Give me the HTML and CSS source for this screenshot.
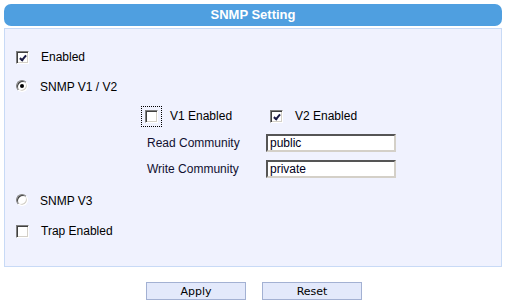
FILE: index.html
```html
<!DOCTYPE html>
<html lang="en">
<head>
    <meta charset="UTF-8">
    <title>SNMP Setting</title>
    <link rel="stylesheet" href="styles.css">
</head>
<body>
    <div class="page">
        <div class="header">SNMP Setting</div>

        <div class="panel">
            <label class="row">
                <input type="checkbox" class="check" checked>
                <span>Enabled</span>
            </label>
            <label class="row">
                <input type="radio" name="ver" class="radio" checked>
                <span>SNMP V1 / V2</span>
            </label>

            <!-- v1/v2 options -->
            <div class="sub">
                <label class="sub-cell">
                    <input type="checkbox" class="check focus">
                    <span>V1 Enabled</span>
                </label>
                <label class="sub-cell v2">
                    <input type="checkbox" class="check" checked>
                    <span>V2 Enabled</span>
                </label>
                <div class="sub-label">Read Community</div>
                <div class="sub-field"><input type="text" class="text" value="public"></div>
                <div class="sub-label">Write Community</div>
                <div class="sub-field"><input type="text" class="text" value="private"></div>
            </div>

            <label class="row">
                <input type="radio" name="ver" class="radio">
                <span>SNMP V3</span>
            </label>
            <label class="row">
                <input type="checkbox" class="check">
                <span>Trap Enabled</span>
            </label>
        </div>

        <div class="buttons">
            <button class="btn">Apply</button>
            <button class="btn">Reset</button>
        </div>
    </div>
</body>
</html>
```

FILE: styles.css
```css
body {
    margin: 0;
    background: #fff;
    font-family: 'Liberation Sans', Arial, sans-serif;
    font-size: 12px;
    color: #000;
}

.page {
    padding: 4px 4px 0 4px;
}

.header {
    height: 22px;
    line-height: 22px;
    border-radius: 7px;
    background: #4f9fe0;
    color: #fff;
    font-weight: bold;
    font-size: 13px;
    text-align: center;
}

.panel {
    margin-top: 2px;
    height: 239px;
    padding: 13px 0 0 11px;
    box-sizing: border-box;
    border: 1px solid #c8daf6;
    background: #f0f2fe;
}

.row {
    display: flex;
    align-items: center;
    gap: 12px;
    height: 30px;
}

/* classic checkbox / radio */
.check,
.radio {
    appearance: none;
    -webkit-appearance: none;
    margin: 0;
    width: 13px;
    height: 13px;
    flex: none;
    position: relative;
    background: #fff;
    border: 1px solid;
    border-color: #808080 #fff #fff #808080;
    box-shadow: inset 1px 1px #404040, inset -1px -1px #d4d0c8;
    box-sizing: border-box;
}

.check:checked::after {
    content: '';
    position: absolute;
    left: 4px;
    top: 2px;
    width: 2px;
    height: 5px;
    border: solid #1a1a44;
    border-width: 0 2px 2px 0;
    transform: rotate(40deg);
}

.radio {
    width: 12px;
    height: 12px;
    border-radius: 50%;
    margin-top: -3px;
}

.radio:checked::after {
    content: '';
    position: absolute;
    left: 3px;
    top: 3px;
    width: 4px;
    height: 4px;
    border-radius: 50%;
    background: #000;
}

.focus {
    outline: 1px dotted #000;
    outline-offset: 3px;
}

.sub {
    display: grid;
    grid-template-columns: 121px 130px;
    grid-auto-rows: 26px;
    grid-template-rows: 28px;
    margin-left: 129px;
    margin-bottom: 4px;
    align-items: center;
}

.sub-cell {
    display: flex;
    align-items: center;
    gap: 12px;
}

.v2 {
    padding-left: 4px;
}

.sub-label {
    padding-left: 2px;
    color: #101030;
}

.text {
    width: 130px;
    height: 18px;
    margin: 0;
    padding: 0 2px;
    box-sizing: border-box;
    background: #fff;
    border: 2px solid;
    border-color: #555 #d4d0c8 #d4d0c8 #555;
    font-family: 'Liberation Sans', Arial, sans-serif;
    font-size: 12px;
    color: #000020;
    outline: none;
}

.buttons {
    display: flex;
    justify-content: center;
    gap: 16px;
    margin-top: 15px;
    padding-left: 2px;
}

.btn {
    width: 100px;
    height: 18px;
    margin: 0;
    padding: 0;
    border: 1px solid #a3b1d3;
    background: #e3e9fb;
    font-family: 'DejaVu Sans', Tahoma, sans-serif;
    font-size: 11px;
    color: #000;
}
```
